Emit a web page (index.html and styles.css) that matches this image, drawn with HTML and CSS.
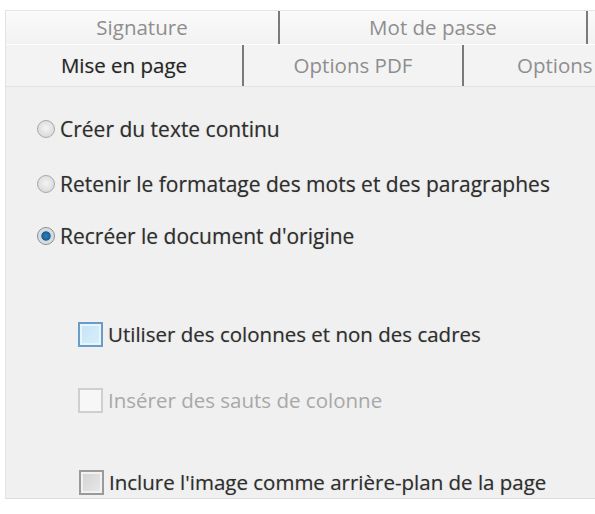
FILE: index.html
```html
<!DOCTYPE html>
<html lang="fr">
<head>
<meta charset="utf-8">
<title>Mise en page</title>
<link rel="stylesheet" href="styles.css">
</head>
<body>
<div class="dialog">
  <div class="tabrow back">
    <div class="tab t-sig">Signature</div>
    <div class="tab t-mdp">Mot de passe</div>
    <div class="tab t-rest"></div>
  </div>
  <div class="tabrow front">
    <div class="tab active t-mep">Mise en page</div>
    <div class="tab t-pdf">Options PDF</div>
    <div class="tab t-opt">Options</div>
  </div>
  <div class="panel">
    <div class="row radio-row r1"><span class="radio"></span><span class="label">Créer du texte continu</span></div>
    <div class="row radio-row r2"><span class="radio"></span><span class="label">Retenir le formatage des mots et des paragraphes</span></div>
    <div class="row radio-row r3"><span class="radio checked"></span><span class="label">Recréer le document d'origine</span></div>
    <div class="row check-row c1"><span class="check hover"></span><span class="label">Utiliser des colonnes et non des cadres</span></div>
    <div class="row check-row c2"><span class="check disabled"></span><span class="label dim">Insérer des sauts de colonne</span></div>
    <div class="row check-row c3"><span class="check grey"></span><span class="label">Inclure l'image comme arrière-plan de la page</span></div>
  </div>
</div>
</body>
</html>
```
FILE: styles.css
```css
html, body {
  margin: 0;
  padding: 0;
  background: #ffffff;
}
body {
  width: 595px;
  height: 514px;
  overflow: hidden;
  font-family: "Open Sans", "Noto Sans", sans-serif;
  font-size: 20.5px;
  color: #2e2e2e;
}
.dialog {
  margin: 10px 0 0 5px;
  width: 600px;
  background: #f0f0f0;
  border-left: 1px solid #e2e2e2;
  border-bottom: 1px solid #dcdcdc;
}
.tabrow {
  display: flex;
}
.tabrow.back {
  height: 33px;
  background: linear-gradient(#fafafa, #f2f2f2);
  border-top: 1px solid #e6e6e6;
  border-bottom: 1px solid #ffffff;
}
.tabrow.front {
  height: 41px;
  background: #f3f3f3;
  border-bottom: 1px solid #e2e2e2;
}
.tab {
  display: flex;
  align-items: center;
  justify-content: center;
  box-sizing: border-box;
  color: #8e8e8e;
  white-space: nowrap;
  line-height: 1;
}
.tab.active {
  color: #262626;
  text-shadow: 0 0 1px rgba(40, 40, 40, 0.35);
}
.t-sig { width: 274px; border-right: 2px solid #7a7a7a; }
.t-mdp { width: 308px; border-right: 2px solid #7a7a7a; }
.t-rest { flex: 1; }
.t-mep { width: 238px; border-right: 2px solid #7a7a7a; }
.t-pdf { width: 220px; border-right: 2px solid #7a7a7a; }
.t-opt { width: 142px; justify-content: flex-start; padding-left: 53px; }

.panel {
  height: 411px;
  padding: 29px 0 0 31px;
  box-sizing: border-box;
  display: flex;
  flex-direction: column;
}
.row {
  display: flex;
  align-items: center;
  height: 26px;
  white-space: nowrap;
}
.r2 { margin-top: 29px; }
.r3 { margin-top: 26px; }
.c1 { margin-top: 72px; padding-left: 41px; }
.c2 { margin-top: 40px; padding-left: 41px; }
.c3 { margin-top: 56px; padding-left: 42px; }

.label {
  line-height: 26px;
  text-shadow: 0 0 1px rgba(40, 40, 40, 0.35);
}
.radio-row .label {
  font-size: 21px;
}
.label.dim {
  color: #a8a8a8;
  text-shadow: none;
}
.radio {
  width: 16px;
  height: 16px;
  border-radius: 50%;
  border: 1px solid #a9a9a9;
  background: radial-gradient(circle at 50% 45%, #f4f4f4 0%, #dcdcdc 70%, #cfcfcf 100%);
  margin-right: 5px;
  flex: none;
}
.radio.checked {
  border-color: #8a8a8a;
  background: radial-gradient(circle, #2f7fb8 0%, #1a5f93 38%, #c8d5df 44%, #e6e6e6 75%, #d0d0d0 100%);
}
.check {
  width: 25px;
  height: 25px;
  box-sizing: border-box;
  flex: none;
  margin-right: 5px;
  border: 2px solid #a3a3a3;
  background: #ffffff;
}
.check.hover {
  border-color: #6b9cc6;
  background: linear-gradient(135deg, #c4e4f7, #d9effb);
  box-shadow: inset 0 0 0 2px #e8f5fc;
}
.check.disabled {
  border-color: #cfcfcf;
  background: #f7f7f7;
}
.check.grey {
  border-color: #9a9a9a;
  background: linear-gradient(135deg, #d2d2d2, #e9e9e9);
  box-shadow: inset 0 0 0 2px #f2f2f2;
}
```
